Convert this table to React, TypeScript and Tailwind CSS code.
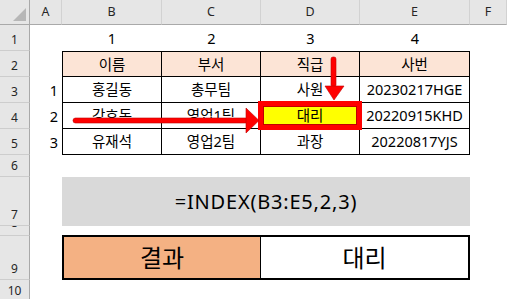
import React from "react";

const columns = ["A", "B", "C", "D", "E", "F"];

const staff = [
  { no: 1, name: "홍길동", dept: "총무팀", rank: "사원", code: "20230217HGE" },
  { no: 2, name: "강호동", dept: "영업1팀", rank: "대리", code: "20220915KHD" },
  { no: 3, name: "유재석", dept: "영업2팀", rank: "과장", code: "20220817YJS" },
];

const headers = ["이름", "부서", "직급", "사번"];

const font = "font-['Noto_Sans','Noto_Sans_CJK_KR',sans-serif]";

function RowHead({ n }: { n: number }) {
  return (
    <div className="flex items-end justify-center overflow-hidden bg-[#e6e6e6] border-r border-b border-r-[#a9a9a9] border-b-[#cdcdcd] pb-[4px] text-[12px] leading-none text-[#262626]">
      {n}
    </div>
  );
}

function TableCell({
  children,
  first,
  head,
  className = "",
}: {
  children?: React.ReactNode;
  first?: boolean;
  head?: boolean;
  className?: string;
}) {
  return (
    <div
      className={
        "flex items-center justify-center border-r border-b border-black text-[14.5px] leading-none text-black " +
        (first ? "border-l " : "") +
        (head ? "border-t bg-[#fce4d6] " : "") +
        className
      }
    >
      {children}
    </div>
  );
}

export default function App() {
  return (
    <div
      className={`relative grid h-[299px] w-[507px] overflow-hidden bg-white ${font} grid-cols-[30px_32px_100px_99px_99px_110px_37px] grid-rows-[25px_26px_26px_26px_26px_26px_22px_49px_10px_44px_19px]`}
    >
      {/* column header strip */}
      <div className="relative bg-[#e6e6e6] border-r border-b border-r-[#a9a9a9] border-b-[#a9a9a9]">
        <svg className="absolute left-0 top-0" width="30" height="25" viewBox="0 0 30 25">
          <polygon points="13,21 26,21 26,8" fill="#b7b7b7" />
        </svg>
      </div>
      {columns.map((c) => (
        <div
          key={c}
          className="flex items-center justify-center bg-[#e6e6e6] border-r border-b border-r-[#d2d2d2] border-b-[#a9a9a9] text-[12.5px] leading-none text-[#262626]"
        >
          {c}
        </div>
      ))}

      {/* row 1: column index */}
      <RowHead n={1} />
      <div />
      {[1, 2, 3, 4].map((n) => (
        <div key={n} className="flex items-center justify-center text-[14.5px] leading-none">
          {n}
        </div>
      ))}
      <div />

      {/* row 2: table header */}
      <RowHead n={2} />
      <div />
      {headers.map((h, i) => (
        <TableCell key={h} head first={i === 0}>
          {h}
        </TableCell>
      ))}
      <div />

      {/* rows 3-5: staff list */}
      {staff.map((p, r) => (
        <React.Fragment key={p.code}>
          <RowHead n={r + 3} />
          <div className="flex items-center justify-end pr-[4px] text-[14.5px] leading-none">
            {p.no}
          </div>
          <TableCell first>{p.name}</TableCell>
          <TableCell>{p.dept}</TableCell>
          {p.rank === "대리" ? (
            <TableCell className="relative bg-[#ffff00]">
              <span className="relative z-[1]">{p.rank}</span>
              <div className="absolute -left-[3px] -right-[3px] -top-[2px] -bottom-[2px] border-[5px] border-[#ff0000] shadow-[inset_0_0_0_1px_#c00000]" />
            </TableCell>
          ) : (
            <TableCell>{p.rank}</TableCell>
          )}
          <TableCell>{p.code}</TableCell>
          <div />
        </React.Fragment>
      ))}

      {/* row 6 */}
      <RowHead n={6} />
      <div className="col-span-6" />

      {/* row 7: formula */}
      <RowHead n={7} />
      <div />
      <div className="col-span-4 flex items-center justify-center bg-[#d9d9d9] text-[20px] leading-none tracking-[0.8px] text-black">
        =INDEX(B3:E5,2,3)
      </div>
      <div />

      {/* row 8: short spacer row, label is clipped */}
      <div className="flex items-start justify-center overflow-hidden bg-[#e6e6e6] border-r border-b border-r-[#a9a9a9] border-b-[#cdcdcd] text-[12px] leading-none text-[#262626]">
        <span className="-mt-[9px]">8</span>
      </div>
      <div className="col-span-6" />

      {/* row 9: result */}
      <RowHead n={9} />
      <div />
      <div className="col-span-4 -mt-px flex border-2 border-black text-[24px] leading-none text-black">
        <div className="flex w-[197px] items-center justify-center border-r border-black bg-[#f4b183]">
          결과
        </div>
        <div className="flex flex-1 items-center justify-center bg-white">대리</div>
      </div>
      <div />

      {/* row 10 */}
      <div className="flex items-end justify-center bg-[#e6e6e6] border-r border-r-[#a9a9a9] pb-[2px] text-[12px] leading-none text-[#262626]">
        10
      </div>
      <div className="col-span-6" />

      {/* arrows drawn over the sheet */}
      <svg
        className="pointer-events-none absolute left-0 top-0 z-10"
        width="507"
        height="299"
        viewBox="0 0 507 299"
      >
        <g fill="#ff0000" stroke="#c00000" strokeWidth="0.6">
          <rect x="331" y="57" width="5" height="30" rx="2" />
          <polygon points="325,86 344,86 334,100" />
          <rect x="73" y="118" width="175" height="5" rx="2.5" />
          <polygon points="246,108 246,133 259,120.5" />
        </g>
      </svg>
    </div>
  );
}
